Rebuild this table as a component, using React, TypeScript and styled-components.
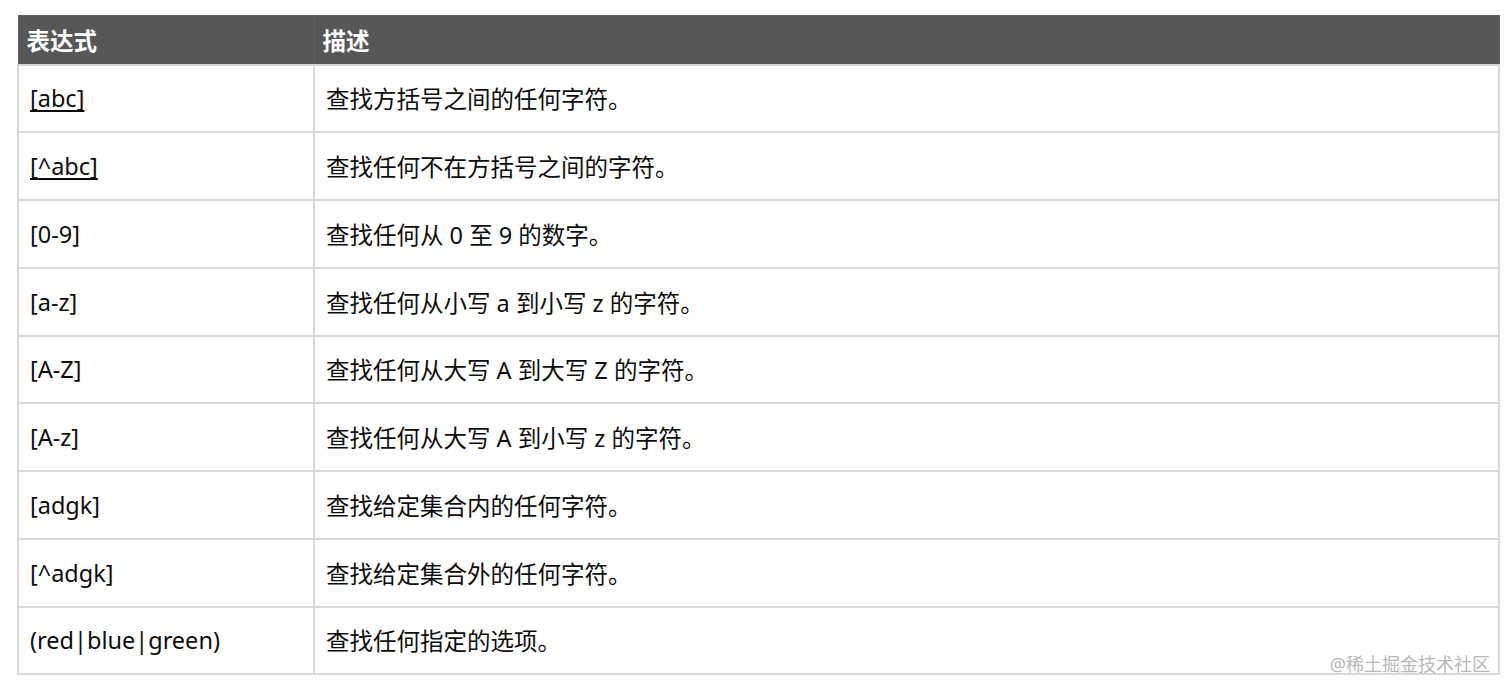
import React from "react"
import styled, { createGlobalStyle } from "styled-components"

const GlobalStyle = createGlobalStyle`
  body {
    margin: 0;
    background: #ffffff;
    font-family: "Noto Sans", "Noto Sans CJK SC", sans-serif;
  }
`

const Page = styled.main`
  position: relative;
  padding: 15px 0 0 17px;
  height: 695px;
  box-sizing: border-box;
`

const Table = styled.table`
  width: 1483px;
  border-collapse: collapse;
  table-layout: fixed;
  font-size: 23.5px;
  color: #0d0d0d;
`

const HeadCell = styled.th<{ $w?: number }>`
  box-sizing: border-box;
  width: ${(p) => (p.$w ? `${p.$w}px` : "auto")};
  height: 49px;
  padding: 0 8px;
  background: #575757;
  color: #ffffff;
  font-weight: 700;
  text-align: left;
  border: 1px solid #5e5e5e;
  border-bottom: 2px solid #d6d6d6;
`

const Cell = styled.td`
  height: 65.75px;
  padding: 0 10px 0 11px;
  border: 2px solid #d9d9d9;
  vertical-align: middle;
  white-space: nowrap;
`

const Link = styled.a`
  color: #0d0d0d;
  text-decoration: underline;
  text-decoration-thickness: 2px;
  text-decoration-skip-ink: none;
  text-underline-offset: 3px;
`

const Watermark = styled.span`
  position: absolute;
  right: 22px;
  top: 650px;
  font-size: 18px;
  color: #b8b8b8;
`

const rows: { expr: string; desc: string; link?: boolean }[] = [
  { expr: "[abc]", desc: "查找方括号之间的任何字符。", link: true },
  { expr: "[^abc]", desc: "查找任何不在方括号之间的字符。", link: true },
  { expr: "[0-9]", desc: "查找任何从 0 至 9 的数字。" },
  { expr: "[a-z]", desc: "查找任何从小写 a 到小写 z 的字符。" },
  { expr: "[A-Z]", desc: "查找任何从大写 A 到大写 Z 的字符。" },
  { expr: "[A-z]", desc: "查找任何从大写 A 到小写 z 的字符。" },
  { expr: "[adgk]", desc: "查找给定集合内的任何字符。" },
  { expr: "[^adgk]", desc: "查找给定集合外的任何字符。" },
  { expr: "(red|blue|green)", desc: "查找任何指定的选项。" },
]

export default function App() {
  return (
    <Page>
      <GlobalStyle />
      <Table>
        <thead>
          <tr>
            <HeadCell $w={296}>表达式</HeadCell>
            <HeadCell>描述</HeadCell>
          </tr>
        </thead>
        <tbody>
          {rows.map((r) => (
            <tr key={r.expr}>
              <Cell>{r.link ? <Link href="#">{r.expr}</Link> : r.expr}</Cell>
              <Cell>{r.desc}</Cell>
            </tr>
          ))}
        </tbody>
      </Table>
      <Watermark>@稀土掘金技术社区</Watermark>
    </Page>
  )
}
